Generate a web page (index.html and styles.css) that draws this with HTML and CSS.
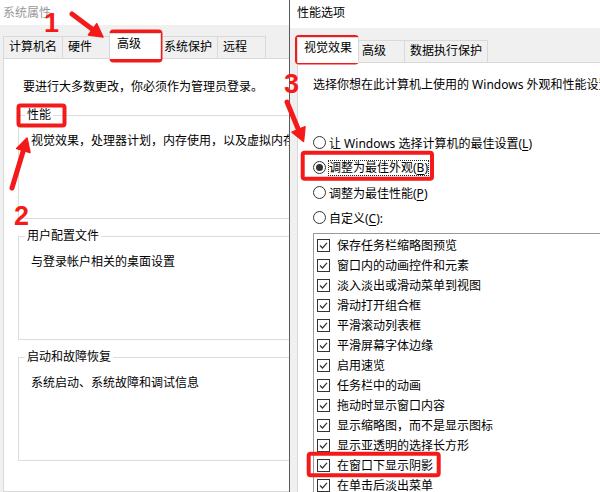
FILE: index.html
```html
<!DOCTYPE html>
<html lang="zh-CN">
<head>
    <meta charset="UTF-8">
    <meta name="viewport" content="width=device-width, initial-scale=1.0">
    <title>性能选项</title>
    <link rel="stylesheet" href="styles.css">
</head>
<body>
    <div class="screen">
        <!-- 系统属性 -->
        <section class="dialog dialog-system">
            <div class="titlebar">系统属性</div>
            <div class="tabs">
                <div class="tab">计算机名</div>
                <div class="tab">硬件</div>
                <div class="tab active">高级</div>
                <div class="tab">系统保护</div>
                <div class="tab">远程</div>
            </div>
            <div class="page">
                <p class="note">要进行大多数更改，你必须作为管理员登录。</p>
                <div class="group">
                    <div class="group-title">性能</div>
                    <p class="group-text">视觉效果，处理器计划，内存使用，以及虚拟内存</p>
                </div>
                <div class="group">
                    <div class="group-title">用户配置文件</div>
                    <p class="group-text">与登录帐户相关的桌面设置</p>
                </div>
                <div class="group">
                    <div class="group-title">启动和故障恢复</div>
                    <p class="group-text">系统启动、系统故障和调试信息</p>
                </div>
            </div>
        </section>

        <!-- 性能选项 -->
        <section class="dialog dialog-perf">
            <div class="titlebar">性能选项</div>
            <div class="tabs">
                <div class="tab active">视觉效果</div>
                <div class="tab">高级</div>
                <div class="tab">数据执行保护</div>
            </div>
            <div class="page">
                <p class="note">选择你想在此计算机上使用的 Windows 外观和性能设置。</p>
                <div class="option"><span class="radio"></span><span>让 Windows 选择计算机的最佳设置(<u>L</u>)</span></div>
                <div class="option"><span class="radio on"></span><span class="focus">调整为最佳外观(<u>B</u>)</span></div>
                <div class="option"><span class="radio"></span><span>调整为最佳性能(<u>P</u>)</span></div>
                <div class="option"><span class="radio"></span><span>自定义(<u>C</u>):</span></div>

                <svg width="0" height="0" class="defs">
                    <symbol id="tick" viewBox="0 0 13 13">
                        <rect x="0.5" y="0.5" width="12" height="12" fill="#fff" stroke="#333"/>
                        <path d="M3 6.5 5.5 9 10 3.8" fill="none" stroke="#333" stroke-width="1.2"/>
                    </symbol>
                </svg>
                <div class="list">
                    <div class="check-row"><svg class="check"><use href="#tick"/></svg>保存任务栏缩略图预览</div>
                    <div class="check-row"><svg class="check"><use href="#tick"/></svg>窗口内的动画控件和元素</div>
                    <div class="check-row"><svg class="check"><use href="#tick"/></svg>淡入淡出或滑动菜单到视图</div>
                    <div class="check-row"><svg class="check"><use href="#tick"/></svg>滑动打开组合框</div>
                    <div class="check-row"><svg class="check"><use href="#tick"/></svg>平滑滚动列表框</div>
                    <div class="check-row"><svg class="check"><use href="#tick"/></svg>平滑屏幕字体边缘</div>
                    <div class="check-row"><svg class="check"><use href="#tick"/></svg>启用速览</div>
                    <div class="check-row"><svg class="check"><use href="#tick"/></svg>任务栏中的动画</div>
                    <div class="check-row"><svg class="check"><use href="#tick"/></svg>拖动时显示窗口内容</div>
                    <div class="check-row"><svg class="check"><use href="#tick"/></svg>显示缩略图，而不是显示图标</div>
                    <div class="check-row"><svg class="check"><use href="#tick"/></svg>显示亚透明的选择长方形</div>
                    <div class="check-row"><svg class="check"><use href="#tick"/></svg>在窗口下显示阴影</div>
                    <div class="check-row"><svg class="check"><use href="#tick"/></svg>在单击后淡出菜单</div>
                </div>
            </div>
        </section>

        <!-- 标注：步骤编号、箭头和红框 -->
        <svg class="marks" viewBox="0 0 600 492">
            <g class="boxes">
                <rect x="111.5" y="31.5" width="49" height="29" rx="2"/>
                <rect x="18.5" y="105.5" width="46" height="20" rx="2"/>
                <rect x="297" y="37" width="60" height="25.5" rx="2"/>
                <rect x="302.7" y="152.7" width="129.3" height="26" rx="2"/>
                <rect x="308.7" y="453.7" width="130" height="21.6" rx="2"/>
            </g>
            <g class="arrows">
                <line x1="72" y1="14" x2="94" y2="30.5"/>
                <polygon points="103,37 88.4,34.9 96.8,23.7"/>
                <line x1="12" y1="188" x2="23.8" y2="149"/>
                <polygon points="27,138 30,152.5 16.6,148.5"/>
                <line x1="287" y1="102" x2="299" y2="131"/>
                <polygon points="303.5,141.5 292,132.2 305,126.8"/>
            </g>
            <text class="step" x="44" y="32">1</text>
            <text class="step" x="14" y="225">2</text>
            <text class="step" x="284" y="93">3</text>
        </svg>
    </div>
</body>
</html>
```

FILE: styles.css
```css
* {
    margin: 0;
    padding: 0;
    box-sizing: border-box;
}

html, body {
    width: 600px;
    height: 492px;
    overflow: hidden;
}

body {
    font-family: "Noto Sans", "Noto Sans CJK SC", sans-serif;
    font-size: 12px;
    color: #000;
    background: #f0f0f0;
}

.screen {
    position: relative;
    display: flex;
    height: 492px;
}

/* 窗口 */
.dialog {
    display: flex;
    flex-direction: column;
    background: #f0f0f0;
    overflow: hidden;
}

.dialog-system {
    width: 290px;
    flex: none;
    border-right: 1px solid #5a5a5a;
}

.dialog-perf {
    flex: 1;
    min-width: 0;
}

.titlebar {
    flex: none;
    background: #fff;
    white-space: nowrap;
}

.dialog-system .titlebar {
    height: 25px;
    line-height: 25px;
    padding-left: 3px;
    color: #999;
}

.dialog-perf .titlebar {
    height: 28px;
    line-height: 26px;
    padding-left: 7px;
}

/* 选项卡 */
.tabs {
    flex: none;
    display: flex;
    align-items: flex-end;
}

.dialog-system .tabs {
    padding: 8px 0 0 3px;
}

.dialog-perf .tabs {
    padding: 9px 0 0 7px;
}

.tab {
    height: 22px;
    min-width: 48px;
    line-height: 20px;
    padding: 0 5px;
    border: 1px solid #d9d9d9;
    border-left: none;
    border-bottom: none;
    background: #f0f0f0;
    white-space: nowrap;
}

.tab:first-child {
    border-left: 1px solid #d9d9d9;
}

.tab.active {
    position: relative;
    z-index: 1;
    height: 26px;
    min-width: 52px;
    margin: 0 -2px -1px;
    padding: 0 7px;
    border-left: 1px solid #d9d9d9;
    background: #fff;
}

.tab.active:first-child {
    margin-left: 0;
    padding: 0 6px;
}

/* 选项卡页面 */
.page {
    flex: 1;
    background: #fff;
    border: 1px solid #d9d9d9;
}

.dialog-system .page {
    width: 330px;
    margin-left: 3px;
    padding: 20px 0 0 14px;
}

.dialog-perf .page {
    width: 330px;
    margin-left: 7px;
    padding: 14px 0 0 15px;
}

.note {
    line-height: 16px;
    white-space: nowrap;
}

.dialog-system .note {
    padding-left: 5px;
    margin-bottom: 20px;
}

.dialog-perf .note {
    margin-bottom: 37px;
}

/* 分组框 */
.group {
    height: 104px;
    padding: 0 12px;
    border: 1px solid #dcdcdc;
}

.group + .group {
    margin-top: 17px;
}

.group-title {
    width: fit-content;
    margin: -9px 0 0 -6px;
    padding: 0 2px;
    line-height: 16px;
    background: #fff;
    white-space: nowrap;
}

.group-text {
    margin-top: 10px;
    line-height: 16px;
    white-space: nowrap;
}

/* 单选按钮 */
.option {
    display: flex;
    align-items: center;
    height: 25px;
    white-space: nowrap;
}

.radio {
    flex: none;
    display: grid;
    place-items: center;
    width: 13px;
    height: 13px;
    margin-right: 3px;
    border: 1px solid #333;
    border-radius: 50%;
}

.radio.on::after {
    content: "";
    width: 7px;
    height: 7px;
    border-radius: 50%;
    background: #333;
}

.focus {
    display: inline-block;
    line-height: 14px;
    outline: 1px dotted #222;
}

u {
    text-underline-offset: 2px;
}

/* 复选列表 */
.defs {
    position: absolute;
}

.list {
    height: 300px;
    margin-top: 3px;
    padding: 1px 0 0 3px;
    border: 1px solid #9a9a9a;
    background: #fff;
}

.check-row {
    display: flex;
    align-items: center;
    height: 20px;
    white-space: nowrap;
}

.check {
    flex: none;
    width: 13px;
    height: 13px;
    margin-right: 7px;
}

/* 标注 */
.marks {
    position: absolute;
    left: 0;
    top: 0;
    width: 600px;
    height: 492px;
    pointer-events: none;
}

.boxes rect {
    fill: none;
    stroke: #f41a1a;
    stroke-width: 4;
}

.arrows line {
    stroke: #f41a1a;
    stroke-width: 5;
    stroke-linecap: round;
}

.arrows polygon {
    fill: #f41a1a;
    stroke: #f41a1a;
    stroke-width: 1.5;
    stroke-linejoin: round;
}

.step {
    font-family: "Liberation Sans", Arial, sans-serif;
    font-size: 27px;
    font-weight: 700;
    fill: #f41a1a;
}
```
